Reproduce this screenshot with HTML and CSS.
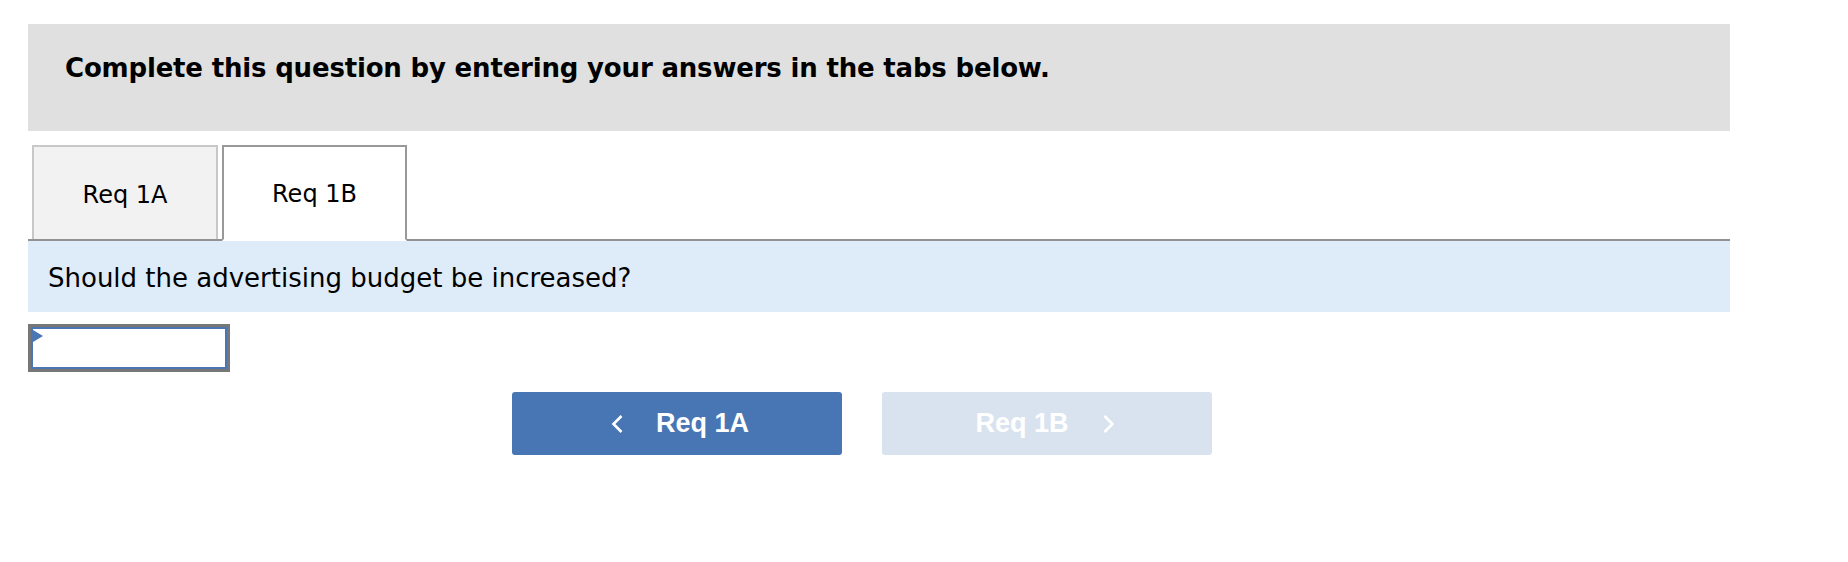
FILE: index.html
```html
<!DOCTYPE html>
<html>
<head>
<meta charset="utf-8">
<link rel="stylesheet" href="styles.css">
</head>
<body>
<div class="page">
  <div class="instructions">Complete this question by entering your answers in the tabs below.</div>
  <div class="tabs">
    <div class="tab">Req 1A</div>
    <div class="tab active">Req 1B</div>
  </div>
  <div class="question">Should the advertising budget be increased?</div>
  <div class="answer"><div class="answer-inner"><span class="marker"></span></div></div>
  <div class="nav">
    <button class="nav-btn prev"><svg class="chev" width="12" height="18" viewBox="0 0 12 18"><path d="M10.5 1 L2.5 9 L10.5 17" fill="none" stroke="#fff" stroke-width="2.6"/></svg><span>Req 1A</span></button>
    <button class="nav-btn next"><span>Req 1B</span><svg class="chev" width="12" height="18" viewBox="0 0 12 18"><path d="M1.5 1 L9.5 9 L1.5 17" fill="none" stroke="#fff" stroke-width="2.6"/></svg></button>
  </div>
</div>
</body>
</html>
```
FILE: styles.css
```css
html, body {
  margin: 0;
  padding: 0;
  background: #fff;
}
.page {
  margin-left: 28px;
  padding-top: 24px;
  width: 1702px;
  font-family: "DejaVu Sans", Verdana, sans-serif;
  color: #000;
}
.instructions {
  background: #e0e0e0;
  height: 107px;
  box-sizing: border-box;
  padding: 29px 0 0 37px;
  font-weight: bold;
  font-size: 26px;
  letter-spacing: -0.18px;
  line-height: 30px;
}
.tabs {
  display: flex;
  gap: 4px;
  margin-top: 14px;
  padding-left: 4px;
  border-bottom: 2px solid #929292;
}
.tab {
  width: 186px;
  height: 94px;
  box-sizing: border-box;
  border: 2px solid #c8c8c8;
  border-bottom: none;
  background: #f2f2f2;
  display: flex;
  align-items: center;
  justify-content: center;
  font-size: 24px;
  padding-top: 4px;
}
.tab.active {
  width: 185px;
  height: 96px;
  margin-bottom: -2px;
  border-color: #999;
  background: #fff;
  border-bottom: 2px solid #fff;
  padding-top: 2px;
}
.question {
  background: #deebf8;
  height: 71px;
  box-sizing: border-box;
  padding: 22px 0 0 20px;
  font-size: 26px;
  line-height: 30px;
}
.answer {
  margin-top: 12px;
  width: 202px;
  height: 48px;
  box-sizing: border-box;
  border: 3px solid #777;
}
.answer-inner {
  height: 100%;
  box-sizing: border-box;
  border: 2px solid #4a76b4;
  background: #fff;
  position: relative;
}
.marker {
  position: absolute;
  left: 0;
  top: 1px;
  width: 0;
  height: 0;
  border-top: 6px solid transparent;
  border-bottom: 6px solid transparent;
  border-left: 10px solid #4a76b4;
}
.nav {
  display: flex;
  gap: 40px;
  margin-top: 20px;
  padding-left: 484px;
}
.nav-btn {
  width: 330px;
  height: 63px;
  border: none;
  border-radius: 3px;
  display: flex;
  align-items: center;
  justify-content: center;
  gap: 33px;
  font-family: "Liberation Sans", Arial, sans-serif;
  font-weight: bold;
  font-size: 27px;
  color: #fff;
  padding: 0;
}
.nav-btn.prev {
  background: #4876b4;
  padding-left: 6px;
}
.nav-btn.next {
  background: #d9e3ef;
  gap: 34px;
  padding-right: 4px;
}
.chev {
  display: block;
}
```
